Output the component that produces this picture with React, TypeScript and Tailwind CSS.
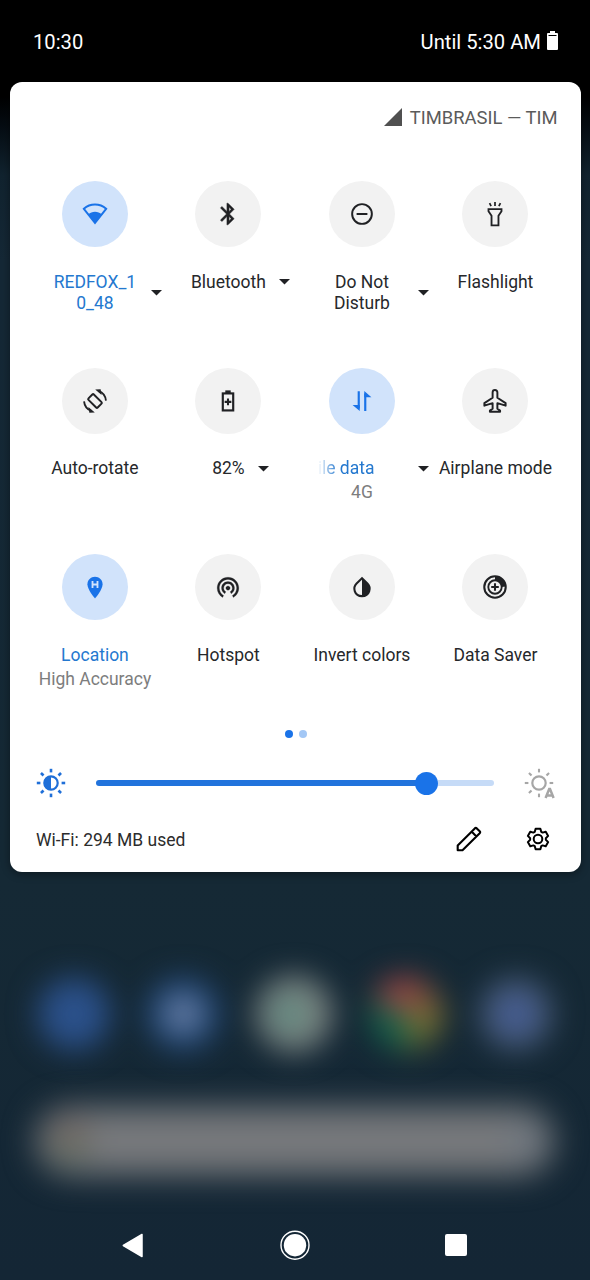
import type { ReactNode } from "react";

function Icon({ children }: { children: ReactNode }) {
  return (
    <svg viewBox="0 0 24 24" className="size-[26px] overflow-visible" fill="none" stroke="currentColor" strokeWidth="1.8">
      {children}
    </svg>
  );
}

const icons = {
  wifi: (
    <Icon>
      <path d="M1.7 7.2C7.6 2 16.4 2 22.3 7.2L12 20.2z" />
      <path d="M5.8 12.4C9 9.1 15 9.1 18.2 12.4L12 20.2z" fill="currentColor" stroke="none" />
    </Icon>
  ),
  bluetooth: (
    <Icon>
      <path fill="currentColor" strokeWidth="0.4" d="M17.71 7.71 12 2h-1v7.59L6.41 5 5 6.41 10.59 12 5 17.59 6.41 19 11 14.41V22h1l5.71-5.71-4.3-4.29 4.3-4.29zM13 5.83l1.88 1.88L13 9.59V5.83zm1.88 10.46L13 18.17v-3.76l1.88 1.88z" />
    </Icon>
  ),
  dnd: (
    <Icon>
      <circle cx="12" cy="12" r="9.1" />
      <path d="M7 12h10" />
    </Icon>
  ),
  flashlight: (
    <Icon>
      <path d="M6 7.5h12v2l-2.8 4.2v8.8H8.8v-8.8L6 9.5z" strokeWidth="1.7" />
      <path d="M12 1v3.6M7 1.9l1.4 2.9M17 1.9l-1.4 2.9" strokeWidth="1.6" />
    </Icon>
  ),
  rotate: (
    <Icon>
      <rect x="-6" y="-3.5" width="12" height="7" rx="1" transform="translate(12 12) rotate(45)" strokeWidth="1.8" />
      <path d="M15 2.7C19 4 21.7 7.5 22.1 11.7M9 21.3C5 20 2.3 16.5 1.9 12.3" strokeWidth="1.7" />
      <path d="M12.2 1.3l5-.1.9 5.2zM11.8 22.7l-5 .1-.9-5.2z" fill="currentColor" stroke="none" />
    </Icon>
  ),
  battery: (
    <Icon>
      <rect x="7.2" y="5" width="9.6" height="15.7" strokeWidth="2" />
      <path d="M9.5 2.2h5V5h-5z" fill="currentColor" stroke="none" />
      <path d="M12 9.7v6.2M8.9 12.8h6.2" strokeWidth="1.9" />
    </Icon>
  ),
  data: (
    <Icon>
      <path d="M9 3v16M15 5v16.2" strokeWidth="2" />
      <path d="M9.9 21.2v-5.6H3.3zM14.1 2.8v5.8h6.6z" fill="currentColor" stroke="none" />
    </Icon>
  ),
  airplane: (
    <Icon>
      <path d="M12 1.9c-1.3 0-2.2.9-2.2 2.2V9L2.2 13.9V16.3l7.6-2.3v5.2l-2.5 1.7v1h9.4v-1l-2.5-1.7v-5.2l7.6 2.3V13.9L14.2 9V4.1c0-1.3-.9-2.2-2.2-2.2z" strokeWidth="1.8" strokeLinejoin="round" />
    </Icon>
  ),
  location: (
    <Icon>
      <path d="M12 2.5C8.1 2.5 5 5.6 5 9.5c0 5.25 7 13 7 13s7-7.75 7-13c0-3.9-3.1-7-7-7z" fill="currentColor" stroke="none" />
      <path d="M9.7 6.5v6.4M14.3 6.5v6.4M9.7 9.7h4.6" stroke="#d2e3fc" strokeWidth="1.7" />
    </Icon>
  ),
  hotspot: (
    <Icon>
      <path fill="currentColor" strokeWidth="0.2" d="M12 11c-1.1 0-2 .9-2 2s.9 2 2 2 2-.9 2-2-.9-2-2-2zm6 2c0-3.31-2.69-6-6-6s-6 2.69-6 6c0 2.22 1.21 4.15 3 5.19l1-1.74c-1.19-.7-2-1.97-2-3.45 0-2.21 1.79-4 4-4s4 1.79 4 4c0 1.48-.81 2.75-2 3.45l1 1.74c1.79-1.04 3-2.97 3-5.19zM12 3C6.48 3 2 7.48 2 13c0 3.7 2.01 6.92 4.99 8.65l1-1.73C5.61 18.53 4 15.96 4 13c0-4.42 3.58-8 8-8s8 3.58 8 8c0 2.96-1.61 5.53-4 6.92l1 1.73c2.99-1.73 5-4.95 5-8.65 0-5.52-4.48-10-10-10z" />
    </Icon>
  ),
  invert: (
    <Icon>
      <path d="M12 3.9L7 8.8C3.2 12.5 4.8 20.4 12 20.4s8.8-7.9 5-11.6z" strokeWidth="1.9" />
      <path d="M12 3.9v16.5c7.2 0 8.8-7.9 5-11.6z" fill="currentColor" stroke="none" />
    </Icon>
  ),
  saver: (
    <Icon>
      <circle cx="12" cy="12" r="9.9" strokeWidth="1.9" />
      <circle cx="12" cy="12" r="6.2" strokeWidth="1.7" />
      <path d="M12 2v3.8a6.2 6.2 0 0 1 6.2 6.2l3.8-.5C21.5 6 17.5 2 12 2z" fill="currentColor" stroke="none" />
      <path d="M12 8.5v7M8.5 12h7" strokeWidth="1.9" />
    </Icon>
  ),
};

type Tile = {
  icon: keyof typeof icons;
  label: string;
  sub?: string;
  active?: boolean;
  menu?: boolean;
  wrap?: string;
  scrolled?: boolean;
};

const tiles: Tile[] = [
  { icon: "wifi", label: "REDFOX_10_48", active: true, menu: true, wrap: "break-all" },
  { icon: "bluetooth", label: "Bluetooth", menu: true },
  { icon: "dnd", label: "Do Not Disturb", menu: true, wrap: "break-normal" },
  { icon: "flashlight", label: "Flashlight" },
  { icon: "rotate", label: "Auto-rotate" },
  { icon: "battery", label: "82%", menu: true },
  { icon: "data", label: "Mobile data", sub: "4G", active: true, menu: true, scrolled: true },
  { icon: "airplane", label: "Airplane mode" },
  { icon: "location", label: "Location", sub: "High Accuracy", active: true },
  { icon: "hotspot", label: "Hotspot" },
  { icon: "invert", label: "Invert colors" },
  { icon: "saver", label: "Data Saver" },
];

function TileLabel({ tile }: { tile: Tile }) {
  if (tile.scrolled) {
    return (
      <div className="flex w-[87px] justify-end overflow-hidden pr-[31px] whitespace-nowrap [mask-image:linear-gradient(to_right,transparent_0px,black_20px)]">
        {tile.label}
      </div>
    );
  }
  return <div className={tile.wrap ? `w-[87px] ${tile.wrap}` : "whitespace-nowrap"}>{tile.label}</div>;
}

function QuickTile({ tile }: { tile: Tile }) {
  return (
    <div className="flex flex-col items-center">
      <div className={`flex size-[66px] items-center justify-center rounded-full ${tile.active ? "bg-[#d1e3fb] text-[#1a73e8]" : "bg-[#f2f2f2] text-[#202124]"}`}>
        {icons[tile.icon]}
      </div>
      <div className={`mt-[24.6px] flex items-center justify-center text-center text-[17.5px] leading-[21px] ${tile.active ? "text-[#2478cf]" : "text-[#26282b]"}`}>
        {tile.menu && <span className="w-[24px] shrink-0" />}
        <TileLabel tile={tile} />
        {tile.menu && (
          <svg viewBox="0 0 11 6" className="ml-[13px] h-[6px] w-[11px] shrink-0">
            <path d="M0 0h11L5.5 5.5z" fill="#202124" />
          </svg>
        )}
      </div>
      {tile.sub && <div className="mt-[2.6px] text-[17.5px] leading-[21px] whitespace-nowrap text-[#7d7d7d]">{tile.sub}</div>}
    </div>
  );
}

const rays = [0, 45, 90, 135, 180, 225, 270, 315];

function Sun({ auto }: { auto?: boolean }) {
  return (
    <svg viewBox="-15 -15 30 30" className={`size-[30px] overflow-visible ${auto ? "text-[#a6a6a6]" : "text-[#1f6fd8]"}`} fill="none" stroke="currentColor" strokeWidth="2.2">
      <circle r="6.7" />
      {!auto && <path d="M0-7A7 7 0 0 0 0 7z" fill="currentColor" stroke="none" />}
      {rays
        .filter((a) => !(auto && a === 135))
        .map((a) => (
          <path key={a} d="M0-14.2v3.6" strokeWidth={auto ? 2.1 : 2.6} transform={`rotate(${a})`} />
        ))}
      {auto && <path d="M6.6 15L10.2 6h.8l3.6 9M7.9 12.6h5.4" strokeWidth="2.5" />}
    </svg>
  );
}

function polar(deg: number, r: number) {
  const a = (deg * Math.PI) / 180;
  return `${(r * Math.sin(a)).toFixed(2)} ${(-r * Math.cos(a)).toFixed(2)}`;
}

const gearPath =
  "M" +
  [0, 60, 120, 180, 240, 300]
    .flatMap((t) => [polar(t - 24, 7.9), polar(t - 13, 10.6), polar(t + 13, 10.6), polar(t + 24, 7.9)])
    .join("L") +
  "z";

export default function App() {
  return (
    <div className="relative flex h-[1280px] w-[590px] flex-col overflow-hidden bg-[linear-gradient(to_bottom,#000_0px,#000_95px,#050c12_125px,#11232f_175px,#152836_260px,#152935_880px,#142635_1280px)] font-['Roboto',sans-serif]">
      <header className="flex h-[84px] shrink-0 items-center justify-between pr-[32px] pl-[33px] text-[20.2px] text-white">
        <span>10:30</span>
        <span className="flex items-center gap-[6px]">
          Until 5:30 AM
          <svg viewBox="0 0 11 19" className="-mt-[2px] h-[19px] w-[11px]">
            <path d="M3 0h5v2h2a1 1 0 0 1 1 1v15a1 1 0 0 1-1 1H1a1 1 0 0 1-1-1V3a1 1 0 0 1 1-1h2z" fill="#fff" />
            <path d="M1.5 4.5h8" stroke="#000" strokeWidth="1" />
          </svg>
        </span>
      </header>

      <main className="-mt-[2px] ml-[10px] flex h-[790px] w-[571px] shrink-0 flex-col rounded-[12px] bg-white shadow-[0_2px_8px_rgba(0,0,0,0.4)]">
        <div className="flex h-[71px] shrink-0 items-center justify-end gap-[8px] pr-[23.5px] text-[18.4px] text-[#5b5b5b]">
          <svg viewBox="0 0 18 18" className="-mt-[2px] size-[18px]">
            <path d="M18 0v18H0z" fill="#505050" />
          </svg>
          TIMBRASIL — TIM
        </div>

        <div className="mt-[28px] ml-[18.2px] grid h-[547px] w-[534px] shrink-0 auto-rows-[186.7px] grid-cols-4">
          {tiles.map((t) => (
            <QuickTile key={t.label} tile={t} />
          ))}
        </div>

        <div className="mt-[2px] flex h-[8px] shrink-0 justify-center gap-[6px]">
          <span className="size-[8px] rounded-full bg-[#1a73e8]" />
          <span className="size-[8px] rounded-full bg-[#a3c7f5]" />
        </div>

        <div className="mt-[30px] flex h-[30px] shrink-0 items-center pl-[26px]">
          <Sun />
          <div className="ml-[30px] flex w-[398px] items-center">
            <div className="h-[6px] w-[320px] rounded-l-full bg-[#2173dc]" />
            <div className="-ml-px size-[23px] shrink-0 rounded-full bg-[#1a73e8]" />
            <div className="h-[6px] flex-1 rounded-r-full bg-[#c6dbf7]" />
          </div>
          <div className="ml-[30px]">
            <Sun auto />
          </div>
        </div>

        <footer className="mt-[26px] flex h-[30px] shrink-0 items-center pr-[29px] pl-[26px] text-[17.5px] text-[#2c2c2c]">
          <span className="flex-1 pt-[2px]">Wi-Fi: 294 MB used</span>
          <svg viewBox="0 0 26 26" className="size-[26px]" fill="none" stroke="#000" strokeWidth="2.1" strokeLinejoin="round">
            <path d="M1.7 24.3v-4.8L18.8 2.4a1.5 1.5 0 0 1 2 0l2.9 2.9a1.5 1.5 0 0 1 0 2L6.5 24.3zM15.6 5.6l4.8 4.8" />
          </svg>
          <svg viewBox="-14 -14 28 28" className="ml-[42px] size-[28px]" fill="none" stroke="#000" strokeWidth="2" strokeLinejoin="round">
            <path d={gearPath} />
            <circle r="4.3" />
          </svg>
        </footer>
      </main>

      <section className="mt-[106px] flex h-[72px] shrink-0 items-center justify-between px-[38px] blur-[15px]">
        <div className="size-[72px] rounded-full bg-[#2b518b]" />
        <div className="flex size-[72px] items-center justify-center rounded-full bg-[#244b7d]">
          <div className="size-[34px] rounded-full bg-[#7485a6]" />
        </div>
        <div className="flex size-[76px] items-center justify-center rounded-full bg-[#7f8684]">
          <div className="size-[36px] rounded-full bg-[linear-gradient(to_right,#3f897c,#7b8a80)]" />
        </div>
        <div className="size-[74px] rounded-full bg-[conic-gradient(#a04545_0deg,#75513b_50deg,#807533_90deg,#5e6b35_170deg,#16624b_190deg,#16624b_285deg,#a04545_310deg)]" />
        <div className="flex size-[72px] items-center justify-center rounded-full bg-[#485b77]">
          <div className="size-[40px] rounded-full bg-[#435b94]" />
        </div>
      </section>

      <section className="mx-[36px] mt-[57px] flex h-[68px] shrink-0 items-center justify-between rounded-full bg-[#77797c] px-[14px] blur-[16px]">
        <div className="size-[40px] rounded-full bg-[linear-gradient(#7d5e5e,#55705c)]" />
        <div className="size-[30px] rounded-full bg-[#6b7682]" />
      </section>

      <nav className="mt-auto flex h-[70px] shrink-0 items-center justify-between pr-[123px] pl-[122px]">
        <svg viewBox="0 0 22 26" className="h-[26px] w-[22px]">
          <path d="M1.3 13.5L20 2.5V24.5z" fill="#fff" stroke="#fff" strokeWidth="1.5" strokeLinejoin="round" />
        </svg>
        <svg viewBox="0 0 32 32" className="size-[32px]">
          <circle cx="16" cy="16.2" r="14" fill="none" stroke="#fff" strokeWidth="1.4" />
          <circle cx="16" cy="16.2" r="11.2" fill="#fff" />
        </svg>
        <div className="size-[22px] rounded-[2px] bg-white" />
      </nav>
    </div>
  );
}
